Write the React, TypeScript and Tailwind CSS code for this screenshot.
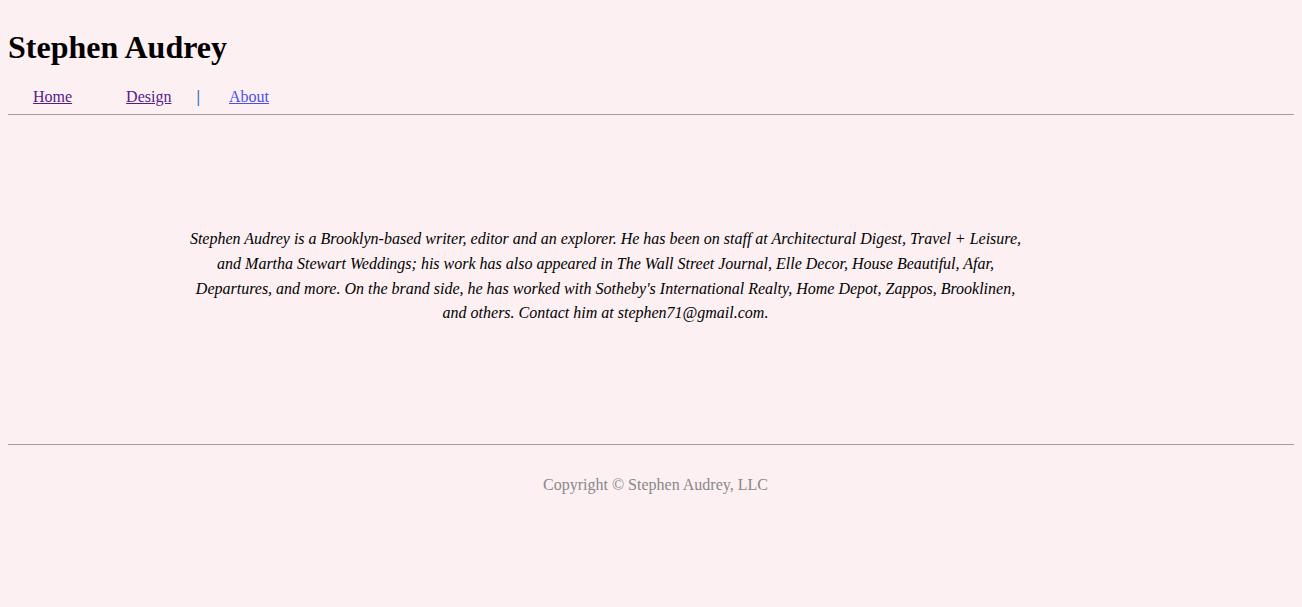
export default function App() {
  return (
    <div
      className="min-h-screen bg-[#fcf0f3] p-2 text-black"
      style={{ fontFamily: '"Liberation Serif", "Times New Roman", serif' }}
    >
      <h1 className="mt-[21px] mb-[22px] text-[32px] font-bold leading-[37px]">Stephen Audrey</h1>
      <nav className="flex items-center text-[16px] leading-[18px]">
        <a href="#" className="ml-[25px] text-[#551a8b] underline">Home</a>
        <a href="#" className="ml-[54px] text-[#551a8b] underline">Design</a>
        <span className="ml-[25px] font-bold text-[#1f6fc0]">|</span>
        <a href="#" className="ml-[29px] text-[#4d4de8] underline">About</a>
      </nav>
      <hr className="mt-[8px] border-0 border-t border-[#9f9f9f]" />
      <p className="mt-[112px] ml-[175px] w-[845px] text-center text-[16px] italic leading-[24.8px]">
        Stephen Audrey is a Brooklyn-based writer, editor and an explorer. He has been on staff at Architectural Digest, Travel + Leisure, and Martha Stewart Weddings; his work has also appeared in The Wall Street Journal, Elle Decor, House Beautiful, Afar, Departures, and more. On the brand side, he has worked with Sotheby's International Realty, Home Depot, Zappos, Brooklinen, and others. Contact him at stephen71@gmail.com.
      </p>
      <hr className="mt-[118px] border-0 border-t border-[#9f9f9f]" />
      <p className="mt-[31px] pl-[9px] text-center text-[16px] leading-[18px] text-[#888888]">
        Copyright © Stephen Audrey, LLC
      </p>
    </div>
  );
}
